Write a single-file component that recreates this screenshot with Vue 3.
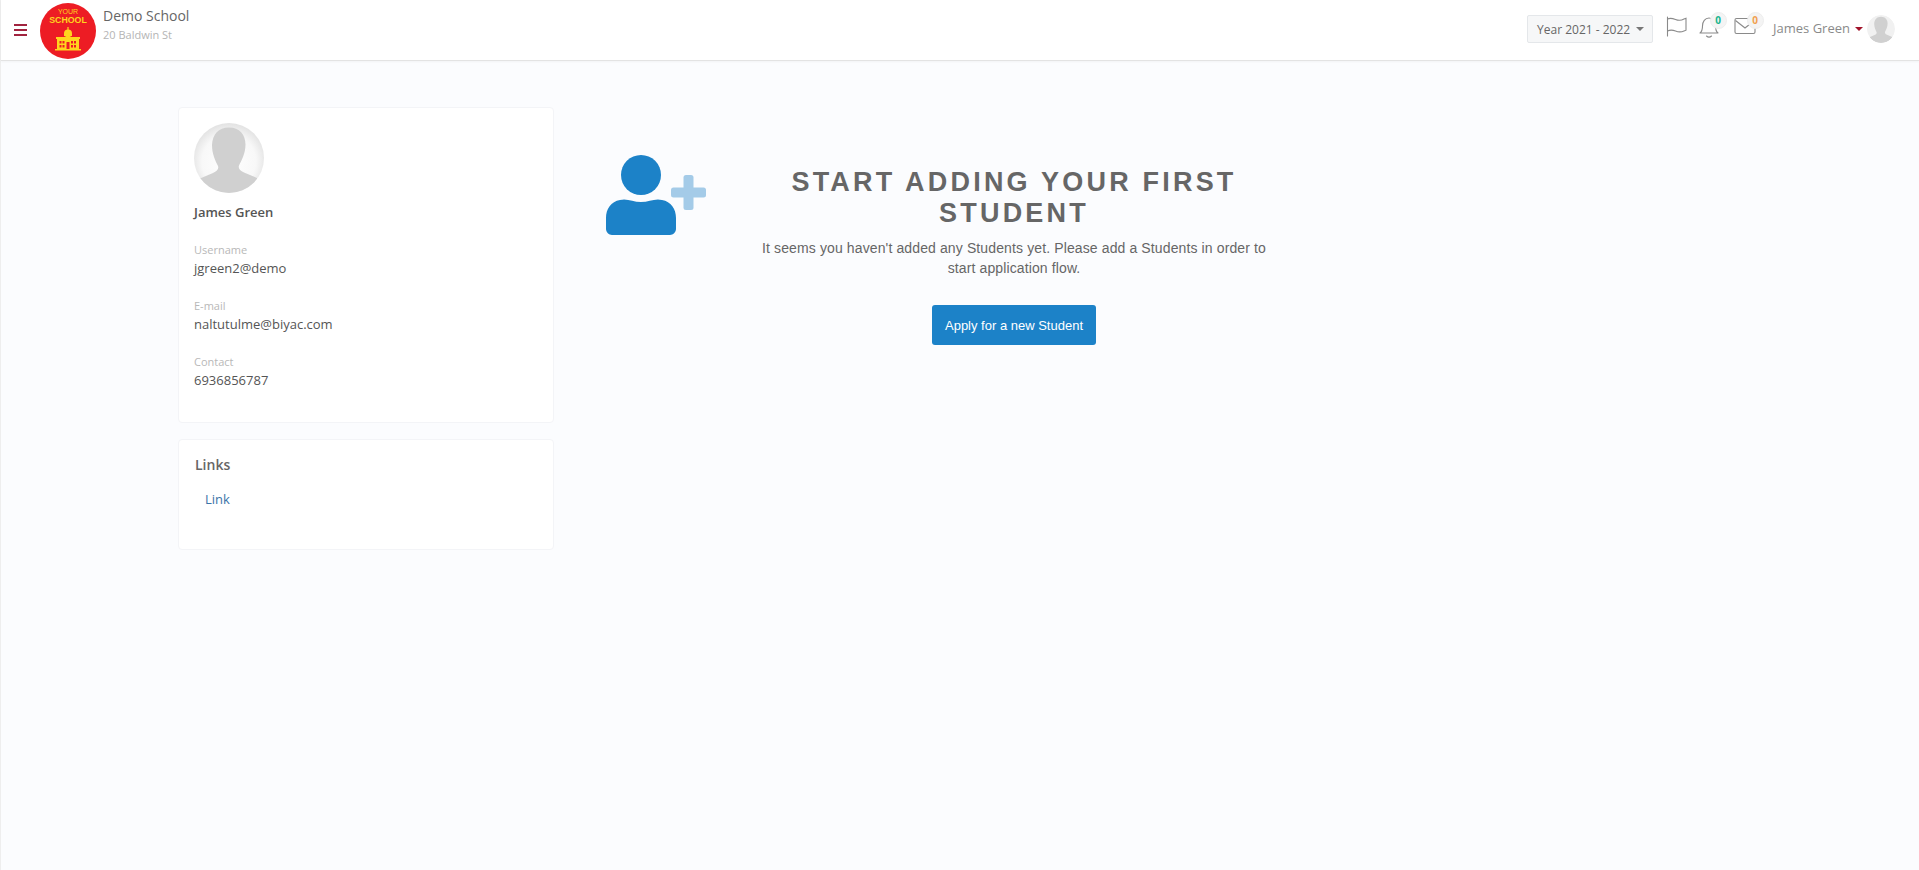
<script setup>
const fields = [
  { label: 'Username', value: 'jgreen2@demo' },
  { label: 'E-mail', value: 'naltutulme@biyac.com' },
  { label: 'Contact', value: '6936856787' },
]
</script>

<template>
  <div class="page">
    <header class="topbar">
      <div class="brand">
        <button class="burger" aria-label="Menu"><span></span><span></span><span></span></button>
        <svg class="logo" viewBox="0 0 56 56">
          <circle cx="28" cy="28" r="28" fill="#ed1c24" />
          <text x="28" y="10.500" text-anchor="middle" class="logo-a">YOUR</text>
          <text x="28" y="19.500" text-anchor="middle" class="logo-b">SCHOOL</text>
          <g fill="#ffd51e">
            <path d="M27.400 24h1.200v3h-1.200z" />
            <path d="M28 26.500a4 4 0 0 1 4 4V33h-8v-2.500a4 4 0 0 1 4-4z" />
            <path d="M16 34h8.500l3.500-2 3.500 2H40v2H16z" />
            <path fill-rule="evenodd" d="M17 36h22v10.500H17zM19.500 38v2.500h2V38zm3 0v2.500h2V38zm8.500 0v2.500h2V38zm3 0v2.500h2V38zM19.500 42v2.500h2V42zm3 0v2.500h2V42zm8.500 0v2.500h2V42zm3 0v2.500h2V42zM26.500 39v7.500h3V39z" />
            <path d="M15 46h26v1.500H15z" />
          </g>
        </svg>
        <div class="school">
          <div class="school-name">Demo School</div>
          <div class="school-addr">20 Baldwin St</div>
        </div>
      </div>
      <div class="tools">
        <button class="year">Year 2021 - 2022<i class="caret grey"></i></button>
        <svg class="ico flag" viewBox="0 0 22 21" fill="none" stroke="#8a8a8a" stroke-width="1.100">
          <path d="M1.500 1v19" stroke-linecap="round" />
          <path d="M1.500 3c3-1.500 5.500-.5 8 .5s6 1 8.500-.5l2-.8v12l-2 .8c-3 1.300-6 1-8.500 0s-5-1.500-8 0" />
        </svg>
        <span class="icon-wrap bell">
          <svg class="ico" viewBox="0 0 20 22" fill="none" stroke="#8a8a8a" stroke-width="1.100">
            <path d="M1 17c2-1.500 2.500-3.500 2.500-7 0-4.500 2.500-8 6.500-8s6.500 3.500 6.500 8c0 3.500.5 5.500 2.500 7z" stroke-linejoin="round" />
            <path d="M7.500 20c1.500 1.300 3.500 1.300 5 0" stroke-linecap="round" />
          </svg>
          <span class="badge green">0</span>
        </span>
        <span class="icon-wrap mail">
          <svg class="ico" viewBox="0 0 22 18" fill="none" stroke="#8a8a8a" stroke-width="1.100">
            <rect x="1" y="1.500" width="20" height="15" rx="1.500" />
            <path d="M1.500 3.500l9.500 7.500 9.500-7.500" />
          </svg>
          <span class="badge orange">0</span>
        </span>
        <span class="user-name">James Green</span>
        <i class="caret red"></i>
        <svg class="avatar-small" viewBox="0 0 70 70">
          <defs>
            <clipPath id="smallClip"><circle cx="35" cy="35" r="35" /></clipPath>
          </defs>
          <g clip-path="url(#smallClip)">
            <rect width="70" height="70" fill="#f1f1f1" />
            <path fill="#d0d0d0" d="M35 4.500c10.500 0 16.500 7 16.500 17 0 9-4 16-6.500 21-1 3 1 5 5 7l13 5.500V70H6V55.500l13-5.500c4-2 6-4 5-7-2.500-5-6-12-6-21C18.500 11.500 24.500 4.500 35 4.500z" />
          </g>
        </svg>
      </div>
    </header>

    <main class="content">
      <aside class="sidebar">
        <section class="card profile">
          <svg class="avatar" viewBox="0 0 70 70">
            <defs>
              <clipPath id="bigClip"><circle cx="35" cy="35" r="35" /></clipPath>
              <radialGradient id="bigBg" cx="50%" cy="55%" r="55%">
                <stop offset="0%" stop-color="#ffffff" />
                <stop offset="70%" stop-color="#f8f8f8" />
                <stop offset="100%" stop-color="#e2e2e2" />
              </radialGradient>
            </defs>
            <g clip-path="url(#bigClip)">
              <rect width="70" height="70" fill="url(#bigBg)" />
              <path fill="#d0d0d0" d="M35 4.500c10.500 0 16.500 7 16.500 17 0 9-4 16-6.500 21-1 3 1 5 5 7l13 5.500V70H6V55.500l13-5.500c4-2 6-4 5-7-2.500-5-6-12-6-21C18.500 11.500 24.500 4.500 35 4.500z" />
            </g>
          </svg>
          <h2 class="name">James Green</h2>
          <div v-for="f in fields" :key="f.label" class="field">
            <div class="field-label">{{ f.label }}</div>
            <div class="field-value">{{ f.value }}</div>
          </div>
        </section>
        <section class="card links">
          <h3 class="links-title">Links</h3>
          <a class="link" href="#">Link</a>
        </section>
      </aside>

      <section class="empty">
        <svg class="empty-icon" viewBox="0 0 102 80">
          <circle cx="35" cy="20" r="20" fill="#1c82c8" />
          <path fill="#1c82c8" d="M14 45c7-2 13 2 21 2s14-4 21-2c9 1.500 14 9 14 18v11c0 3-3 6-6 6H6c-3 0-6-3-6-6V63c0-9 5-16.500 14-18z" />
          <rect x="65" y="32.500" width="35" height="10" rx="2.500" fill="#a4cbe8" />
          <rect x="77.500" y="20" width="10" height="35" rx="2.500" fill="#a4cbe8" />
        </svg>
        <div class="empty-text">
          <h1 class="headline">START ADDING YOUR FIRST STUDENT</h1>
          <p class="desc">It seems you haven't added any Students yet. Please add a Students in order to start application flow.</p>
          <button class="apply">Apply for a new Student</button>
        </div>
      </section>
    </main>
  </div>
</template>

<style>
html, body { margin: 0; background: #fbfcfe; }
</style>

<style scoped>
.page {
  min-height: 870px;
  background: #fbfcfe;
  border-left: 1px solid #eeeeee;
  box-sizing: border-box;
  font-family: "Open Sans", sans-serif;
  color: #555;
}
.topbar {
  height: 61px;
  box-sizing: border-box;
  background: #fff;
  border-bottom: 1px solid #e3e3e3;
  box-shadow: 0 1px 2px rgba(0,0,0,.04);
  display: flex;
  justify-content: space-between;
  align-items: center;
}
.brand { display: flex; align-items: center; }
.burger {
  width: 13px;
  height: 12px;
  margin: -1px 0 0 13px;
  padding: 0;
  border: 0;
  background: none;
  display: flex;
  flex-direction: column;
  justify-content: space-between;
}
.burger span { display: block; height: 2px; background: #a1243f; }
.logo { width: 56px; height: 56px; margin: 1px 0 0 13px; flex: none; }
.logo-a { font: 7px "Liberation Sans", sans-serif; fill: #ffd51e; }
.logo-b { font: bold 8.800px "Liberation Sans", sans-serif; fill: #ffd51e; }
.school { margin-left: 7px; margin-top: -13px; }
.school-name { font-size: 14px; line-height: 20px; color: #666; }
.school-addr { font-size: 11px; line-height: 15px; margin-top: 1px; color: #b5b5b5; }
.tools { display: flex; align-items: center; height: 60px; padding-right: 24px; }
.year {
  width: 126px;
  height: 28px;
  margin-top: -2px;
  box-sizing: border-box;
  border: 1px solid #e4e7ea;
  border-radius: 2px;
  background: #f6f7f8;
  font: 12px "Open Sans", sans-serif;
  color: #666;
  padding: 0 9px;
  display: flex;
  align-items: center;
  white-space: nowrap;
}
.caret {
  display: inline-block;
  width: 0;
  height: 0;
  border-left: 4px solid transparent;
  border-right: 4px solid transparent;
  border-top: 4px solid #777;
}
.caret.grey { margin-left: 6px; }
.caret.red { border-top-color: #a1132a; margin: -2px 4px 0 5px; }
.ico { display: block; }
.flag { width: 22px; height: 21px; margin: -7px 0 0 13px; }
.icon-wrap { position: relative; display: block; }
.bell { margin: -7px 0 0 11px; }
.bell .ico { width: 20px; height: 22px; }
.mail { margin: -8px 0 0 15px; }
.mail .ico { width: 22px; height: 18px; }
.badge {
  position: absolute;
  right: -7.500px;
  width: 17px;
  height: 17px;
  border-radius: 50%;
  background: #f4f4f4;
  border: 1px solid #eeeeee;
  box-sizing: border-box;
  font-size: 10px;
  font-weight: 700;
  line-height: 15px;
  text-align: center;
}
.bell .badge { top: -4px; }
.mail .badge { top: -5.500px; }
.badge.green { color: #19b58e; }
.badge.orange { color: #f0a050; }
.user-name { margin: -5px 0 0 17px; font-size: 13px; color: #8a8a8a; white-space: nowrap; }
.avatar-small { width: 28px; height: 28px; border-radius: 50%; margin-top: -2px; }
.content { display: flex; align-items: flex-start; padding: 46px 0 0 177px; }
.sidebar { width: 376px; display: flex; flex-direction: column; gap: 16px; flex: none; }
.card {
  background: #fff;
  border: 1px solid #f3f4f7;
  border-radius: 4px;
  box-sizing: border-box;
}
.profile { height: 316px; padding: 15px 15px 0; }
.avatar { display: block; width: 70px; height: 70px; }
.name { margin: 10px 0 0; font-size: 13px; line-height: 18px; font-weight: 600; color: #555; }
.field { margin-top: 21px; }
.field-label { font-size: 11px; line-height: 15px; color: #b8b8b8; }
.field-value { font-size: 13px; line-height: 18px; margin-top: 2px; color: #555; }
.links { height: 111px; padding: 15px 16px 0; }
.links-title { margin: 0; font-size: 14px; line-height: 20px; font-weight: 600; color: #666; }
.link { display: block; margin: 15px 0 0 10px; font-size: 13px; line-height: 18px; color: #3a74a8; text-decoration: none; }
.empty { display: flex; align-items: flex-start; margin-left: 52px; padding-top: 48px; }
.empty-icon { width: 102px; height: 80px; display: block; flex: none; }
.empty-text { width: 516px; margin-left: 48px; margin-top: 12px; text-align: center; font-family: "Liberation Sans", Arial, sans-serif; }
.headline { margin: 0; font-size: 27px; line-height: 31px; font-weight: 700; letter-spacing: 3.200px; color: #666; }
.desc { margin: 9px auto 0; font-size: 14px; line-height: 20px; letter-spacing: .12px; color: #666; }
.apply {
  display: block;
  margin: 27px auto 0;
  width: 164px;
  height: 40px;
  border: 0;
  border-radius: 3px;
  background: #1c82c8;
  color: #fff;
  font: 13px "Liberation Sans", Arial, sans-serif;
}
</style>
